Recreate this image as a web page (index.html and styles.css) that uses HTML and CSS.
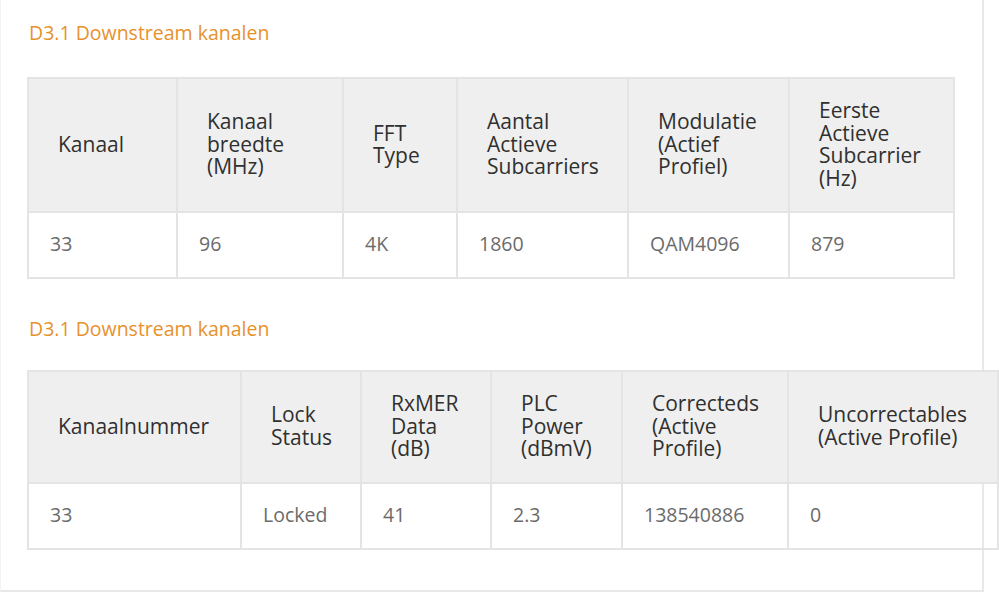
FILE: index.html
```html
<!DOCTYPE html>
<html lang="nl">
<head>
<meta charset="utf-8">
<title>D3.1 Downstream kanalen</title>
<link rel="stylesheet" href="styles.css">
</head>
<body>
<div class="panel">
  <h2 class="title">D3.1 Downstream kanalen</h2>
  <table class="grid grid-a">
    <colgroup>
      <col style="width:149px"><col style="width:166px"><col style="width:114px"><col style="width:171px"><col style="width:161px"><col style="width:165px">
    </colgroup>
    <thead>
      <tr>
        <th>Kanaal</th>
        <th>Kanaal<br>breedte<br>(MHz)</th>
        <th>FFT<br>Type</th>
        <th>Aantal<br>Actieve<br>Subcarriers</th>
        <th>Modulatie<br>(Actief<br>Profiel)</th>
        <th>Eerste<br>Actieve<br>Subcarrier<br>(Hz)</th>
      </tr>
    </thead>
    <tbody>
      <tr>
        <td>33</td><td>96</td><td>4K</td><td>1860</td><td>QAM4096</td><td>879</td>
      </tr>
    </tbody>
  </table>

  <h2 class="title title-second">D3.1 Downstream kanalen</h2>
  <table class="grid grid-b">
    <colgroup>
      <col style="width:213px"><col style="width:120px"><col style="width:130px"><col style="width:131px"><col style="width:166px"><col style="width:210px">
    </colgroup>
    <thead>
      <tr>
        <th>Kanaalnummer</th>
        <th>Lock<br>Status</th>
        <th>RxMER<br>Data<br>(dB)</th>
        <th>PLC<br>Power<br>(dBmV)</th>
        <th>Correcteds<br>(Active<br>Profile)</th>
        <th>Uncorrectables<br>(Active Profile)</th>
      </tr>
    </thead>
    <tbody>
      <tr>
        <td>33</td><td>Locked</td><td>41</td><td>2.3</td><td>138540886</td><td>0</td>
      </tr>
    </tbody>
  </table>
</div>
</body>
</html>
```

FILE: styles.css
```css
html, body {
  margin: 0;
  padding: 0;
  background: #ffffff;
}

body {
  font-family: "Open Sans", "Noto Sans", sans-serif;
  width: 999px;
  overflow: hidden;
}

.panel {
  width: 984px;
  box-sizing: border-box;
  border-left: 1px solid #f3f3f3;
  border-right: 2px solid #e8e8e8;
  border-bottom: 2px solid #e8e8e8;
  padding: 20px 0 40px 26px;
}

.title {
  margin: 0;
  font-size: 19.5px;
  line-height: 26px;
  font-weight: 400;
  color: #e8912c;
  padding-left: 2px;
}

.title-second {
  margin-top: 37px;
}

.grid {
  border-collapse: collapse;
  table-layout: fixed;
  margin-top: 31px;
}

.grid-b {
  margin-top: 28px;
}

.grid-a { width: 927px; }
.grid-b { width: 971px; }

.grid th,
.grid td {
  border: 2px solid #e4e4e4;
  text-align: left;
  vertical-align: middle;
  white-space: nowrap;
}

.grid th {
  background: #efefef;
  color: #303030;
  font-size: 21px;
  font-weight: 400;
  line-height: 22.5px;
  padding: 20px 20px 22px 29px;
}

.grid td {
  color: #6b6b6b;
  font-size: 19.5px;
  line-height: 22px;
  padding: 20px 20px 22px 21px;
}
```
